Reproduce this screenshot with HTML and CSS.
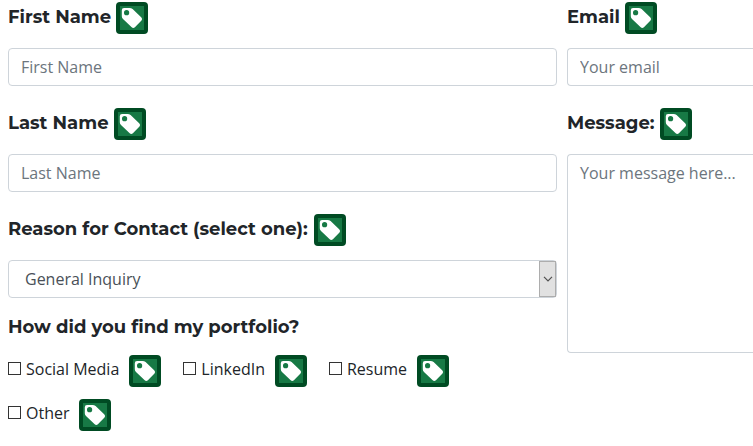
FILE: index.html
```html
<!DOCTYPE html>
<html lang="en">
<head>
<meta charset="utf-8">
<title>Contact</title>
<link rel="stylesheet" href="styles.css">
</head>
<body>
<svg class="defs" width="0" height="0" aria-hidden="true">
  <symbol id="tag" viewBox="0 0 32 32">
    <rect width="32" height="32" rx="4" fill="#004b23"/>
    <rect x="4" y="4" width="24" height="24" fill="#177945"/>
    <path fill="#fff" fill-rule="evenodd" d="M5.8 8.2Q5.8 6 8 6H13.5Q15.3 6 16.6 7.1L25.4 15.4Q26.8 16.8 25.5 18.4L18.9 25.2Q17.3 26.7 15.7 25.3L7 17.1Q5.8 16 5.8 14.3ZM10.6 8.1a2.6 2.6 0 1 0 0 5.2a2.6 2.6 0 1 0 0-5.2Z"/>
  </symbol>
</svg>
<form class="contact">
  <div class="column">
    <div class="field">
      <label class="title first" for="first">First Name</label><svg class="tag"><use href="#tag"/></svg>
    </div>
    <input class="control" id="first" placeholder="First Name">
    <div class="field">
      <label class="title last" for="last">Last Name</label><svg class="tag"><use href="#tag"/></svg>
    </div>
    <input class="control" id="last" placeholder="Last Name">
    <div class="field">
      <label class="title reason">Reason for Contact (select one):</label><svg class="tag"><use href="#tag"/></svg>
    </div>
    <div class="control select">
      <span>General Inquiry</span>
      <span class="arrow"><svg width="10" height="6" viewBox="0 0 10 6"><path d="M1 .8L5 4.8L9 .8" fill="none" stroke="#505050" stroke-width="1.2"/></svg></span>
    </div>
    <div class="question"><span class="title">How did you find my portfolio?</span></div>
    <div class="choices">
      <label class="choice social"><input type="checkbox"><span>Social Media</span><svg class="tag"><use href="#tag"/></svg></label>
      <label class="choice linkedin"><input type="checkbox"><span>LinkedIn</span><svg class="tag"><use href="#tag"/></svg></label>
      <label class="choice"><input type="checkbox"><span>Resume</span><svg class="tag"><use href="#tag"/></svg></label>
    </div>
    <div class="choices">
      <label class="choice"><input type="checkbox"><span>Other</span><svg class="tag"><use href="#tag"/></svg></label>
    </div>
  </div>
  <div class="column">
    <div class="field">
      <label class="title email" for="email">Email</label><svg class="tag"><use href="#tag"/></svg>
    </div>
    <input class="control open" id="email" placeholder="Your email">
    <div class="field">
      <label class="title message" for="message">Message:</label><svg class="tag"><use href="#tag"/></svg>
    </div>
    <textarea class="control open area" id="message" placeholder="Your message here..."></textarea>
  </div>
</form>
</body>
</html>
```

FILE: styles.css
```css
* { box-sizing: border-box; }
body {
  margin: 0;
  height: 446px;
  overflow: hidden;
  background: #fff;
  color: #212529;
  font: 16px/24px "Open Sans", sans-serif;
}
.defs { display: block; height: 0; }
.contact {
  display: grid;
  grid-template-columns: 549px 1fr;
  gap: 10px;
  padding: 2px 0 0 8px;
}
.column { min-width: 0; }
.field { display: flex; height: 32px; margin-bottom: 14px; }
.title {
  flex: none;
  height: 30px;
  font: 700 18px/30px Montserrat, Inter, sans-serif;
  white-space: nowrap;
}
.first { width: 108px; }
.last { width: 106px; }
.reason { width: 306px; }
.email { width: 58px; }
.message { width: 93px; }
.tag { flex: none; display: block; width: 32px; height: 32px; }
.control {
  display: block;
  width: 100%;
  height: 38px;
  margin: 0 0 22px;
  padding: 6px 12px;
  border: 1px solid #ced4da;
  border-radius: 4px;
  background: #fff;
  color: #495057;
  font: 16px/24px "Open Sans", sans-serif;
}
.control::placeholder { color: #6c757d; opacity: 1; }
.open { border-right: 0; border-radius: 4px 0 0 4px; }
.area { height: 199px; resize: none; }
.select {
  display: flex;
  justify-content: space-between;
  align-items: center;
  margin-bottom: 14px;
  padding: 0 0 0 16px;
}
.arrow {
  display: flex;
  align-items: center;
  justify-content: center;
  width: 17px;
  height: 36px;
  border: 1px solid #adadad;
  background: #e1e1e1;
}
.question { display: flex; height: 43px; }
.choices { display: flex; height: 32px; margin-bottom: 12px; }
.choice { display: flex; }
.choice span { line-height: 28px; margin-right: 10px; }
.choice input {
  appearance: none;
  width: 13px;
  height: 13px;
  margin: 7px 5px 0 0;
  border: 1px solid #333;
  background: #fff;
}
.social, .linkedin { margin-right: 22px; }
```
